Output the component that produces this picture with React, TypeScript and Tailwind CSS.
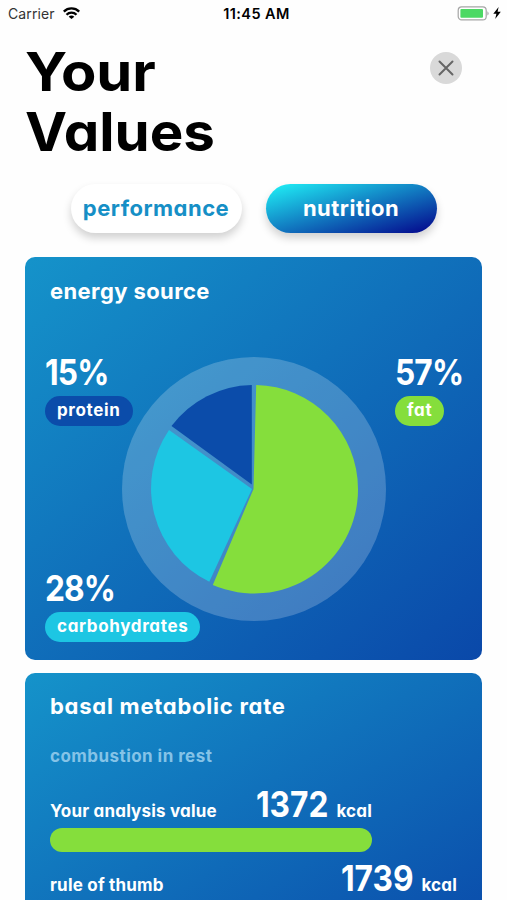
import React from "react";

const StatusBar = () => {
  return (
    <div className="grid h-7 grid-cols-3 items-center pl-2 pr-1.5 font-[Inter,sans-serif] text-black">
      <div className="flex items-center gap-2 pb-0.5">
        <span className="text-[14px] tracking-[0.1px] text-[#333]">Carrier</span>
        <svg className="h-3 w-[17px]" viewBox="0 0 17 12" fill="none" stroke="black" strokeWidth="2.3">
          <path d="M0.8 4.6a11 11 0 0 1 15.4 0" />
          <path d="M3.5 7.7a7 7 0 0 1 10 0" />
          <path d="M8.5 12 5.7 9.8a3.9 3.9 0 0 1 5.6 0Z" fill="black" stroke="none" />
        </svg>
      </div>
      <span className="pl-1 text-center text-[14.5px] font-semibold tracking-[0.4px] whitespace-nowrap">11:45 AM</span>
      <div className="flex items-center justify-end gap-1 pb-0.5">
        <svg className="h-[15px] w-8" viewBox="0 0 32 15">
          <rect x="1.2" y="0.9" width="28" height="13" rx="3.5" fill="white" stroke="#a6a6a6" strokeWidth="1.2" />
          <rect x="3.4" y="3" width="22.6" height="8.8" rx="1" fill="#4cd964" />
          <path d="M30.4 5.2a2.6 2.6 0 0 1 0 4.4Z" fill="#a6a6a6" />
        </svg>
        <svg className="h-3 w-2" viewBox="0 0 8 12">
          <path d="M5.6 0 0.3 6.8h3.1L2.2 12 7.8 4.8H4.6Z" fill="black" />
        </svg>
      </div>
    </div>
  );
};

const Share = ({ value, label, color }: { value: string; label: string; color: string }) => {
  return (
    <div className="flex flex-col items-start">
      <span className="origin-left scale-x-[0.88] text-[36px] leading-9 font-bold tracking-[-1px]">{value}</span>
      <span className={`mt-1.5 flex h-[30px] items-center rounded-full px-3 pb-px text-[17px] font-bold tracking-[0.65px] ${color}`}>
        {label}
      </span>
    </div>
  );
};

const PieChart = () => {
  return (
    <svg className="mt-[3px] size-[264px]" viewBox="0 0 264 264">
      <circle cx="132" cy="132" r="132" fill="white" fillOpacity="0.21" />
      <path d="M131.5 132 134.2 28A104 104 0 0 1 236 132A104 104 0 0 1 90.8 228Z" fill="#85de3c" />
      <path d="M130 132 87.3 224.8A104 104 0 0 1 47 73Z" fill="#1dc6e3" />
      <path d="M129.8 127.5 49.5 69A103 103 0 0 1 129.8 28Z" fill="#0b4caa" />
    </svg>
  );
};

const Rate = ({ label, value }: { label: string; value: string }) => {
  return (
    <div className="flex items-baseline justify-between">
      <span className="text-[17px] font-bold tracking-[0.2px]">{label}</span>
      <span className="flex items-baseline gap-2">
        <span className="origin-right scale-x-[0.88] text-[36px] leading-9 font-bold">{value}</span>
        <span className="text-[17px] font-bold tracking-[0.2px]">kcal</span>
      </span>
    </div>
  );
};

const App = () => {
  return (
    <div className="h-[900px] w-[507px] overflow-hidden bg-[#fefefe] font-[Inter,sans-serif]">
      <StatusBar />

      <div className="[font-feature-settings:'cv11']">
        <div className="flex items-start justify-between pt-[14px] pr-[45px] pl-[25px]">
          <h1 className="flex flex-col text-[54px] leading-[60px] font-bold text-black">
            <span className="origin-left scale-x-[1.07]">Your</span>
            <span className="origin-left scale-x-[1.045]">Values</span>
          </h1>
          <button className="mt-2.5 flex size-8 items-center justify-center rounded-full bg-[#d9d9d9]">
            <svg className="size-4" viewBox="0 0 16 16" stroke="#666" strokeWidth="2" strokeLinecap="round">
              <path d="M1.5 1.5 14.5 14.5M14.5 1.5 1.5 14.5" />
            </svg>
          </button>
        </div>

        <div className="mt-[22px] flex justify-center gap-6 text-[22px] font-bold tracking-[0.5px]">
          <button className="h-[49px] w-[171px] rounded-full bg-white text-[#168fc6] shadow-[0_5px_9px_rgba(0,0,0,0.18)]">
            performance
          </button>
          <button className="h-[49px] w-[171px] rounded-full bg-[linear-gradient(to_bottom_right,#20f4f8,#03028a)] text-white shadow-[0_5px_9px_rgba(0,0,0,0.18)]">
            nutrition
          </button>
        </div>

        <div className="mx-[25px] mt-6 h-[403px] rounded-[10px] bg-[linear-gradient(to_bottom_right,#1593ca,#0a48a9)] pt-5 text-white">
          <h2 className="pl-[25px] text-[22px] leading-7 font-bold tracking-[0.4px]">energy source</h2>
          <div className="mt-[49px] grid grid-cols-[97px_264px_1fr]">
            <div className="flex h-[288px] flex-col justify-between pl-5">
              <Share value="15%" label="protein" color="bg-[#0b4caa]" />
              <Share value="28%" label="carbohydrates" color="bg-[#1dc6e3]" />
            </div>
            <PieChart />
            <div className="pl-[9px]">
              <Share value="57%" label="fat" color="bg-[#85de3c]" />
            </div>
          </div>
        </div>

        <div className="mx-[25px] mt-[13px] h-[290px] rounded-[10px] bg-[linear-gradient(to_bottom_right,#1593ca,#0a48a9)] px-[25px] pt-[19px] text-white">
          <h2 className="text-[22px] leading-7 font-bold tracking-[0.75px]">basal metabolic rate</h2>
          <p className="mt-6 text-[17px] leading-6 font-bold tracking-[0.45px] text-[#85c3e7]">combustion in rest</p>
          <div className="mt-[18px] w-[322px]">
            <Rate label="Your analysis value" value="1372" />
            <div className="mt-[3px] h-6 rounded-full bg-[#85de3c]" />
          </div>
          <div className="mt-2">
            <Rate label="rule of thumb" value="1739" />
          </div>
        </div>
      </div>
    </div>
  );
};

export default App;
